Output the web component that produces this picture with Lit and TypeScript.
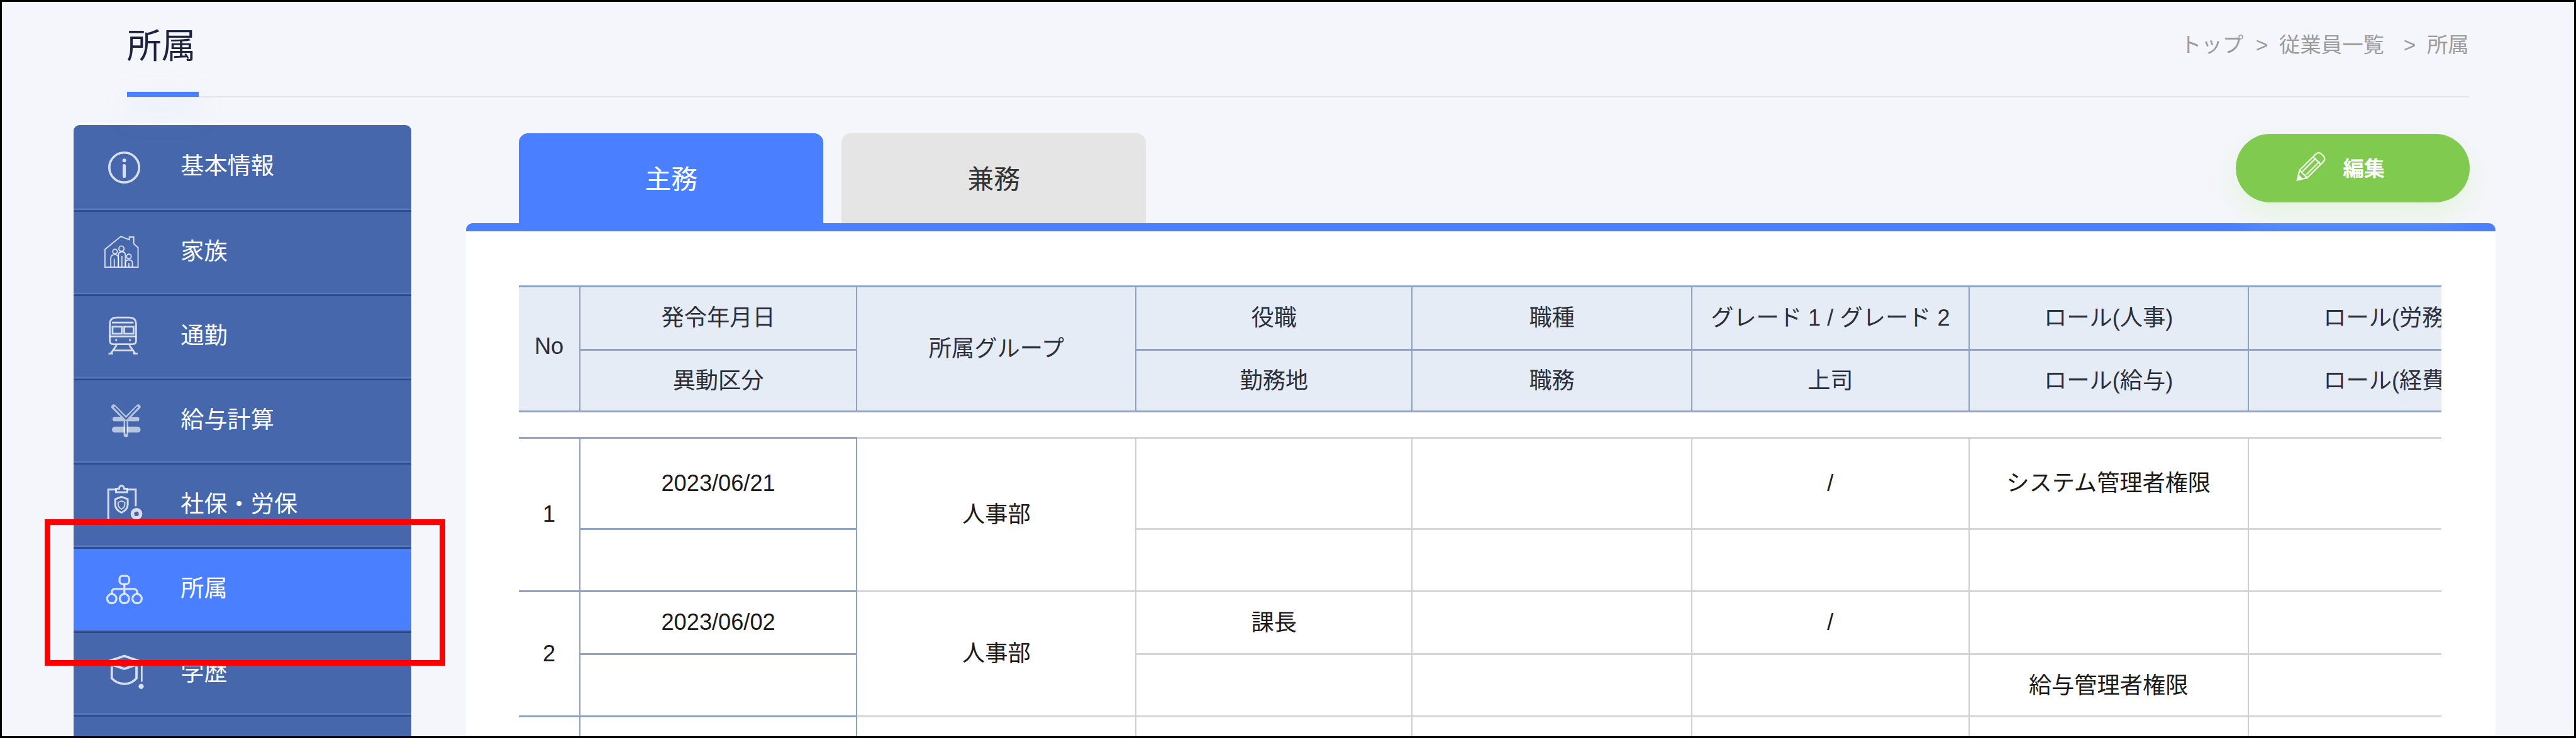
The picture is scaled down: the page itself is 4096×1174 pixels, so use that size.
import { LitElement, html, css, svg } from "lit";
import { customElement } from "lit/decorators.js";

const ICONS = {
  info: svg`<circle cx="35" cy="36" r="25.5" stroke-width="4"/><circle cx="35" cy="24" r="3.2" class="solid"/><path d="M35 33V51" stroke-width="5.5" stroke-linecap="round"/>`,
  family: svg`<g stroke-width="2"><path d="M2 61.3H58.7V28L51.3 21.3V9.7H43.7V14.5L29.3 8.7L2 31Z"/><circle cx="19.3" cy="34.7" r="4"/><circle cx="30.3" cy="29.7" r="4.5"/><circle cx="43" cy="43" r="4"/><path d="M12 61V46q0-6 7-6q6 0 6 6V61"/><path d="M25 61V41q0-6 6-6q6 0 6 6V61"/><path d="M37 61V54q0-5 6-5q6 0 6 5V61"/><path d="M18 47V61M31 42V61M43 54V61"/></g>`,
  train: svg`<g stroke-width="3"><path d="M10.3 15Q10.3 3.3 22 3.3H43.6Q55.3 3.3 55.3 15V43Q55.3 49 49 49H16.6Q10.3 49 10.3 43Z"/><path d="M14 12H51M10.3 35.7H55.3"/><path d="M15 19H31V31H15ZM35 19H51V31H35Z"/><path d="M22 50.7L12 65M43.7 50.7L53.7 65M17 59.7H48.7M8 65H16M50 65H58"/></g><circle cx="21.3" cy="42" r="1.8" class="solid"/><circle cx="44.7" cy="42" r="1.8" class="solid"/>`,
  yen: svg`<path d="M17 12L38 33L59 12M19 33H57M38 33V60" stroke-width="8" stroke-linecap="round" stroke-linejoin="round" class="wide"/><path d="M19 51H58" stroke-width="10" stroke-linecap="round" class="wide"/><path d="M18 12L38 33L58 12M38 36V58" stroke-width="2.5" class="hollow"/>`,
  clipboard: svg`<g stroke-width="3.2"><path d="M21 9.3H7.7V68H46M54.7 38V9.3H40"/><path d="M21 14V8H26Q27 2.7 30.5 2.7Q34 2.7 35 8H40V14Z"/><path d="M30.3 22L41 26V35Q41 44 30.3 49Q19.6 44 19.6 35V26Z"/><path d="M30.3 29L36 31.5V35Q36 40 30.3 43Q24.6 40 24.6 35V31.5Z" stroke-width="2"/><circle cx="56" cy="51" r="7" stroke-width="6"/></g>`,
  org: svg`<g stroke-width="3.5"><rect x="27" y="13" width="16.5" height="14" rx="5"/><path d="M35.3 27V44M13.7 44V41Q13.7 35.3 20 35.3H50.5Q57 35.3 57 41V44"/><circle cx="13.7" cy="52" r="8"/><circle cx="35.3" cy="52" r="8"/><circle cx="57" cy="52" r="8"/></g>`,
  cap: svg`<g stroke-width="4"><path d="M2 17L35.3 6L67 17L35.3 28Z"/><path d="M13.7 24V44Q22 53.7 36 53.7Q48 53.7 56 44V24"/><path d="M65 19V50" stroke-width="2.8"/></g><circle cx="64" cy="58" r="4.5" class="solid"/>`,
};

const NAV = [
  { icon: ICONS.info, label: "基本情報" },
  { icon: ICONS.family, label: "家族" },
  { icon: ICONS.train, label: "通勤" },
  { icon: ICONS.yen, label: "給与計算" },
  { icon: ICONS.clipboard, label: "社保・労保" },
  { icon: ICONS.org, label: "所属", active: true },
  { icon: ICONS.cap, label: "学歴" },
  { icon: null, label: "" },
];

@customElement("app-root")
export class AppRoot extends LitElement {
  static styles = css`
    :host { display: block; overflow: hidden; background: #000; }
    .page {
      zoom: 0.92922;
      position: relative;
      box-sizing: border-box;
      width: 4408px;
      height: 1263px;
      overflow: hidden;
      border: 4px solid #000;
      background: #f5f6fb;
      color: #222;
      font-family: "Liberation Sans", "Noto Sans CJK JP", sans-serif;
    }
    .header {
      display: flex;
      justify-content: space-between;
      box-sizing: border-box;
      height: 164px;
      margin: 0 180px 0 214px;
      border-bottom: 3px solid #e3e4ef;
    }
    .title {
      display: flex;
      flex-direction: column;
      justify-content: space-between;
      box-sizing: border-box;
      width: 123px;
      height: 163px;
      margin: 0 0 -1px;
      padding-top: 36px;
      font-size: 59px;
      line-height: 80px;
      color: #1c2340;
      font-weight: 400;
      white-space: nowrap;
    }
    .title-mark {
      position: relative;
      z-index: 2;
      height: 9px;
      background: #4a80ff;
      box-shadow: 0 22px 46px rgba(170, 195, 255, 0.38);
    }
    .crumbs {
      display: flex;
      margin-top: 53px;
      font-size: 36px;
      line-height: 42px;
      color: #9b9b9b;
      white-space: nowrap;
    }
    .crumb-sep { margin: 0 19px 0 21px; }
    .crumb-sep.wide { margin-left: 33px; }
    .content { display: flex; margin-top: 47px; padding-left: 123px; }
    .side {
      width: 578px;
      flex: none;
      border-radius: 10px 10px 0 0;
      background: #4667ac;
      overflow: hidden;
    }
    .nav-item {
      display: flex;
      align-items: center;
      box-sizing: border-box;
      height: 144.2px;
      padding: 0 0 6px 51px;
      box-shadow: inset 0 -3px 0 #2e4a86, inset 0 -6px 0 #5377c0;
      color: #fff;
      font-size: 40px;
    }
    .nav-item:first-child { height: 148px; }
    .nav-item.active {
      background: #4a80ff;
      box-shadow: inset 0 -3px 0 #2e4a86, inset 0 -5px 0 #4a6fb8;
    }
    .nav-icon { width: 70px; height: 70px; flex: none; fill: none; stroke: rgba(255, 255, 255, 0.78); }
    .nav-icon .solid { fill: rgba(255, 255, 255, 0.78); stroke: none; }
    .nav-icon .wide { stroke: rgba(255, 255, 255, 0.62); }
    .nav-icon .hollow { stroke: #4667ac; }
    .nav-label { margin: 0 0 8px 62px; white-space: nowrap; }
    .main { width: 3473px; flex: none; margin-left: 93px; padding-top: 14px; }
    .tab-row { display: flex; justify-content: space-between; align-items: flex-start; padding: 0 44px 0 91px; }
    .tabs { display: flex; gap: 31px; }
    .tab {
      display: flex;
      align-items: center;
      justify-content: center;
      box-sizing: border-box;
      width: 521px;
      height: 154px;
      border-radius: 16px 16px 0 0;
      padding-bottom: 4px;
      font-size: 45px;
      background: #e5e5e5;
      color: #333;
    }
    .tab.on { background: #4a80ff; color: #fff; }
    .edit {
      position: relative;
      z-index: 2;
      display: flex;
      align-items: center;
      gap: 30px;
      box-sizing: border-box;
      width: 400px;
      height: 117px;
      margin-top: 1px;
      padding: 0 0 4px 103px;
      border: 0;
      border-radius: 59px;
      background: #7fca4f;
      box-shadow: 0 20px 50px rgba(205, 240, 180, 0.42);
      color: #fff;
      font: inherit;
      font-size: 36px;
      font-weight: 700;
    }
    .pencil { width: 50px; height: 50px; flex: none; fill: none; stroke: rgba(255,255,255,.9); stroke-width: 2.4; }
    .pencil .solid { fill: rgba(255,255,255,.9); stroke: none; }
    .panel {
      border-top: 14px solid #4a80ff;
      border-radius: 12px 12px 0 0;
      background: #fff;
      padding: 92px 92px 0 91px;
    }
    .clip { overflow: hidden; }
    table { border-collapse: separate; border-spacing: 0; table-layout: fixed; width: 3438px; font-size: 39px; }
    .c-no { width: 105px; }
    .c-date { width: 474px; }
    .c-a { width: 478px; }
    .c-b { width: 472px; }
    .c-c { width: 479px; }
    .c-d { width: 474px; }
    th, td {
      box-sizing: border-box;
      padding: 0 0 8px;
      text-align: center;
      vertical-align: middle;
      font-weight: 400;
      white-space: nowrap;
    }
    th {
      background: #e6ecf6;
      color: #2b2f3a;
      border-top: 4px solid #8fa3c6;
      border-right: 3px solid #8fa3c6;
    }
    th.end { border-bottom: 4px solid #8fa3c6; }
    .h1 { height: 109px; }
    .h2 { height: 109px; }
    .gap { height: 42px; }
    .gap td { border: 0; padding: 0; }
    td {
      border-top: 4px solid #d6d6d6;
      border-right: 3px solid #cfcfcf;
      color: #1a1a1a;
    }
    td.blue { border-top-color: #8fa3c6; border-right-color: #8fa3c6; }
    td.num { padding: 0; }
    .r1a { height: 156px; }
    .r1b { height: 106px; }
    .r2a { height: 108px; }
    .r2b { height: 107px; }
    .r3a { height: 108px; }
    .mark {
      position: absolute;
      left: 73px;
      top: 886px;
      box-sizing: border-box;
      width: 686px;
      height: 250px;
      border: 10px solid #ff0000;
      pointer-events: none;
    }
  `;

  private emptyCells(n: number) {
    return Array.from({ length: n }, () => html`<td></td>`);
  }

  render() {
    return html`
      <div class="page">
        <header class="header">
          <h1 class="title"><span>所属</span><span class="title-mark"></span></h1>
          <nav class="crumbs">
            <span>トップ</span><span class="crumb-sep">&gt;</span><span>従業員一覧</span><span class="crumb-sep wide">&gt;</span><span>所属</span>
          </nav>
        </header>
        <div class="content">
          <aside class="side">
            ${NAV.map(
              (n) => html`<div class="nav-item ${n.active ? "active" : ""}">
                ${n.icon ? html`<svg class="nav-icon" viewBox="0 0 70 70">${n.icon}</svg>` : ""}
                <span class="nav-label">${n.label}</span>
              </div>`
            )}
          </aside>
          <main class="main">
            <div class="tab-row">
              <div class="tabs">
                <div class="tab on">主務</div>
                <div class="tab">兼務</div>
              </div>
              <button class="edit">
                <svg class="pencil" viewBox="0 0 50 50">
                  <path d="M2 48L6 31L33 4Q38 -1 43 3L47 7Q51 12 46 17L19 44Z"/>
                  <path d="M6 31L19 44M11 33L34 10M17 39L40 16M29 8L42 21"/>
                  <path class="solid" d="M2 48L4 38L12 46Z"/>
                </svg>
                <span>編集</span>
              </button>
            </div>
            <section class="panel">
              <div class="clip">
                <table>
                  <colgroup>
                    <col class="c-no" /><col class="c-date" /><col class="c-a" /><col class="c-b" /><col class="c-c" /><col class="c-d" /><col class="c-a" /><col class="c-a" />
                  </colgroup>
                  <thead>
                    <tr class="h1">
                      <th rowspan="2" class="end">No</th>
                      <th>発令年月日</th>
                      <th rowspan="2" class="end">所属グループ</th>
                      <th>役職</th>
                      <th>職種</th>
                      <th>グレード 1 / グレード 2</th>
                      <th>ロール(人事)</th>
                      <th>ロール(労務)</th>
                    </tr>
                    <tr class="h2">
                      <th class="end">異動区分</th>
                      <th class="end">勤務地</th>
                      <th class="end">職務</th>
                      <th class="end">上司</th>
                      <th class="end">ロール(給与)</th>
                      <th class="end">ロール(経費)</th>
                    </tr>
                  </thead>
                  <tbody>
                    <tr class="gap"><td colspan="8"></td></tr>
                    <tr class="r1a">
                      <td rowspan="2" class="blue num">1</td>
                      <td class="blue num">2023/06/21</td>
                      <td rowspan="2">人事部</td>
                      <td></td><td></td><td class="num">/</td><td>システム管理者権限</td><td></td>
                    </tr>
                    <tr class="r1b">
                      <td class="blue"></td>
                      ${this.emptyCells(5)}
                    </tr>
                    <tr class="r2a">
                      <td rowspan="2" class="blue num">2</td>
                      <td class="blue num">2023/06/02</td>
                      <td rowspan="2">人事部</td>
                      <td>課長</td><td></td><td class="num">/</td><td></td><td></td>
                    </tr>
                    <tr class="r2b">
                      <td class="blue"></td>
                      <td></td><td></td><td></td><td>給与管理者権限</td><td></td>
                    </tr>
                    <tr class="r3a">
                      <td class="blue"></td><td class="blue"></td>
                      ${this.emptyCells(6)}
                    </tr>
                  </tbody>
                </table>
              </div>
            </section>
          </main>
        </div>
        <div class="mark"></div>
      </div>
    `;
  }
}
